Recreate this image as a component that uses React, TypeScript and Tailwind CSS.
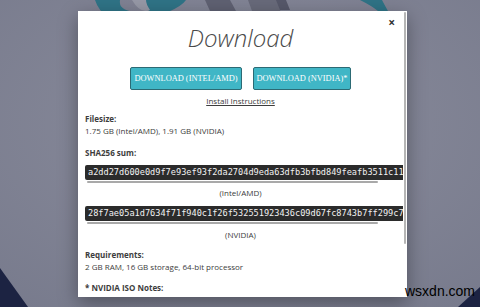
const HASH_AMD = 'a2dd27d600e0d9f7e93ef93f2da2704d9eda63dfb3bfbd849feafb3511c11e4a'
const HASH_NVIDIA = '28f7ae05a1d7634f71f940c1f26f532551923436c09d67fc8743b7ff299c7a15'

function Backdrop() {
  return (
    <svg className="absolute inset-0" width="480" height="307" viewBox="0 0 480 307">
      <defs>
        <radialGradient id="bg" cx="0.5" cy="0.4" r="0.8">
          <stop offset="0" stopColor="#8a8c9c" />
          <stop offset="1" stopColor="#777a8c" />
        </radialGradient>
      </defs>
      <rect width="480" height="307" fill="url(#bg)" />
      <path d="M95 0 Q102 22 135 26 L135 12 Q118 10 120 0 Z" fill="#2f7386" />
      <path d="M138 0 Q150 18 168 12 Q182 6 186 0 Z" fill="#2f7386" />
      <path d="M132 0 Q140 14 150 10 Q146 4 146 0 Z" fill="#9698a6" />
      <path d="M205 0 L210 11 L236 11 L230 0 Z" fill="#5f6172" />
      <path d="M248 0 L252 11 L280 11 L284 0 Z" fill="#686a7a" />
      <path d="M276 0 L280 10 L290 10 L286 0 Z" fill="#56586a" />
      <path d="M360 0 Q372 6 378 11 L388 11 Q384 4 382 0 Z" fill="#2f7386" />
      <path d="M0 268 L28 307 L0 307 Z" fill="#1c2342" />
      <path d="M480 287 L458 307 L480 307 Z" fill="#1c2342" />
    </svg>
  )
}

function HashBlock({ hash }: { hash: string }) {
  return (
    <div className="relative h-[20px] w-[318px] overflow-hidden">
      <div className="h-[15px] w-max rounded-[2px] bg-[#2b2b2b] px-[3px] font-['DejaVu_Sans_Mono',monospace] text-[8.6px] leading-[15px] text-[#f2f2f2]">
        {hash}
      </div>
      <div className="absolute left-[2px] top-[16px] h-[2px] w-[291px] rounded-full bg-[#a9a9a9]" />
    </div>
  )
}

export default function App() {
  return (
    <div className="relative h-[307px] w-[480px] overflow-hidden font-['Open_Sans',sans-serif]">
      <Backdrop />

      <div className="absolute left-[78px] top-[11px] h-[286px] w-[329px] overflow-hidden bg-white shadow-[0_6px_18px_rgba(0,0,0,0.35)]">
        <div className="flex flex-col pl-[7px] pr-[11px] text-[8px] leading-[12px] text-[#3d3d3d]">
          <h1 className="mt-[11px] text-center text-[24px] font-light italic leading-[32px] text-[#4a4a4a]">
            Download
          </h1>
          <div className="mt-[13px] flex justify-center gap-[11px]">
            <button className="h-[23px] w-[112px] rounded-[2px] border border-[#2c6a74] bg-[#40b6c6] font-['Liberation_Serif',serif] text-[8.4px] text-white">
              DOWNLOAD (INTEL/AMD)
            </button>
            <button className="h-[23px] w-[98px] rounded-[2px] border border-[#2c6a74] bg-[#40b6c6] font-['Liberation_Serif',serif] text-[8.4px] text-white">
              DOWNLOAD (NVIDIA)*
            </button>
          </div>
          <a className="mt-[5px] self-center underline">Install Instructions</a>

          <p className="mt-[6px] font-bold">Filesize:</p>
          <p>1.75 GB (Intel/AMD), 1.91 GB (NVIDIA)</p>

          <p className="mt-[10px] font-bold">SHA256 sum:</p>
          <div className="mt-[6px]">
            <HashBlock hash={HASH_AMD} />
          </div>
          <p className="mt-[2px] text-center">(Intel/AMD)</p>
          <div className="mt-[7px]">
            <HashBlock hash={HASH_NVIDIA} />
          </div>
          <p className="mt-[3px] text-center">(NVIDIA)</p>

          <p className="mt-[8px] font-bold">Requirements:</p>
          <p>2 GB RAM, 16 GB storage, 64-bit processor</p>

          <p className="mt-[9px] font-bold">* NVIDIA ISO Notes:</p>
        </div>

        <span className="absolute right-[12px] top-[3px] text-[12px] font-bold text-[#333]">×</span>
        <div className="absolute right-[1px] top-[1px] h-[232px] w-[2px] rounded-full bg-[#b5b5b5]" />
      </div>

      <span className="absolute left-[405px] top-[283px] font-['Liberation_Sans',sans-serif] text-[14px] leading-[16px] text-black">
        wsxdn.com
      </span>
    </div>
  )
}
